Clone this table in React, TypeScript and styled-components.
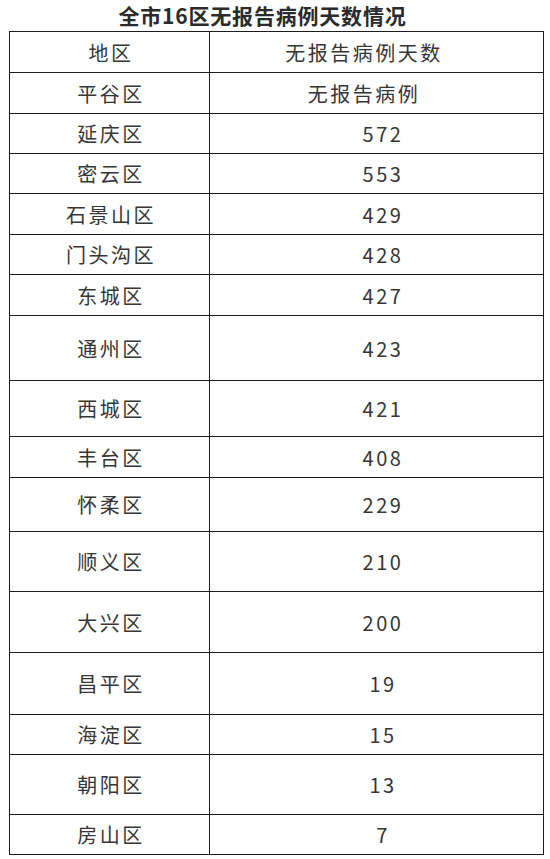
import React from 'react';
import styled, { createGlobalStyle } from 'styled-components';

const GlobalStyle = createGlobalStyle`
  html, body {
    margin: 0;
    padding: 0;
    background: #fff;
  }
  body {
    font-family: "Noto Sans CJK SC", "Noto Sans", sans-serif;
    color: #333;
  }
`;

const Page = styled.div`
  width: 550px;
  height: 859px;
  padding: 0 6px 0 9px;
  box-sizing: border-box;
  background: #fff;
`;

const Title = styled.h1`
  margin: 0;
  height: 31px;
  padding-right: 28px;
  font-size: 21px;
  font-weight: 700;
  letter-spacing: 0.8px;
  line-height: 31px;
  text-align: center;
  color: #2b2b2b;
`;

const Table = styled.div`
  width: 535px;
  border: 1.5px solid #1c1c1c;
  box-sizing: border-box;
`;

const Row = styled.div<{ $h: number }>`
  display: grid;
  grid-template-columns: 199px 1fr;
  height: ${(p) => p.$h}px;
  box-sizing: border-box;
  & + & {
    border-top: 1.5px solid #1c1c1c;
  }
`;

const Cell = styled.div<{ $nudge?: number }>`
  display: flex;
  align-items: center;
  justify-content: center;
  font-size: 20px;
  letter-spacing: 2.5px;
  color: #363636;
  padding-left: ${(p) => Math.max(0, p.$nudge ?? 0) + 3}px;
  padding-right: ${(p) => Math.max(0, -(p.$nudge ?? 0))}px;
  & + & {
    border-left: 1.5px solid #1c1c1c;
  }
`;

const rows: [string, string, number][] = [
  ['平谷区', '无报告病例', 41],
  ['延庆区', '572', 40],
  ['密云区', '553', 40],
  ['石景山区', '429', 41],
  ['门头沟区', '428', 40],
  ['东城区', '427', 41],
  ['通州区', '423', 65],
  ['西城区', '421', 56],
  ['丰台区', '408', 41],
  ['怀柔区', '229', 54],
  ['顺义区', '210', 60],
  ['大兴区', '200', 61],
  ['昌平区', '19', 62],
  ['海淀区', '15', 40],
  ['朝阳区', '13', 60],
  ['房山区', '7', 40],
];

export default function App() {
  return (
    <Page>
      <GlobalStyle />
      <Title>全市16区无报告病例天数情况</Title>
      <Table>
        <Row $h={40}>
          <Cell>地区</Cell>
          <Cell $nudge={-28}>无报告病例天数</Cell>
        </Row>
        {rows.map(([area, days, h]) => (
          <Row key={area} $h={h}>
            <Cell>{area}</Cell>
            <Cell $nudge={/\d/.test(days) ? 10 : -28}>{days}</Cell>
          </Row>
        ))}
      </Table>
    </Page>
  );
}
